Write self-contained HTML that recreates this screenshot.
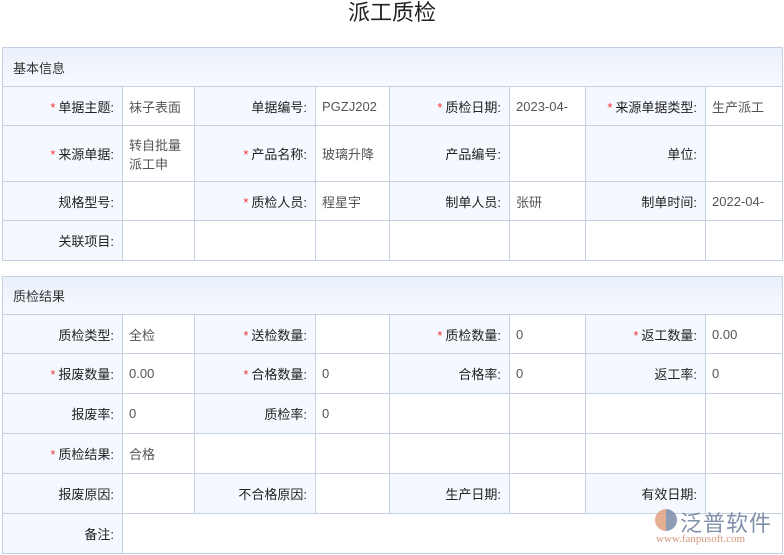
<!DOCTYPE html><html><head><meta charset="utf-8"><style>
body{margin:0;width:784px;height:555px;background:#fff;font-family:"Liberation Sans","Noto Sans CJK SC",sans-serif;font-size:13px;color:#222;position:relative;overflow:hidden}
h1{position:absolute;top:0;left:0;width:784px;margin:0;text-align:center;font-weight:normal;font-size:22px;line-height:26px;color:#222}
table{position:absolute;left:2px;border-collapse:collapse;table-layout:fixed;width:780px}
td{border:1px solid #c5d0e0;padding:0 6px;vertical-align:middle}
td.l{background:#f5f9ff;text-align:right;padding-right:8px}
td.v{color:#555;background:#fff}
tr.h td{background:linear-gradient(#eaf0fb,#f7f9fe);text-align:left;color:#333;padding-left:10px}
i{color:#e33;font-style:normal;margin-right:3px}
</style></head><body>
<h1>派工质检</h1>
<table style="top:47px"><colgroup><col style="width:120px"><col style="width:72px"><col style="width:121px"><col style="width:74px"><col style="width:120px"><col style="width:76px"><col style="width:120px"><col style="width:77px"></colgroup>
<tr class="h" style="height:39px"><td colspan="8">基本信息</td></tr>
<tr style="height:39px"><td class="l"><i>*</i>单据主题:</td><td class="v">袜子表面</td><td class="l">单据编号:</td><td class="v">PGZJ202</td><td class="l"><i>*</i>质检日期:</td><td class="v">2023-04-</td><td class="l"><i>*</i>来源单据类型:</td><td class="v">生产派工</td></tr>
<tr style="height:56px"><td class="l"><i>*</i>来源单据:</td><td class="v">转自批量派工申</td><td class="l"><i>*</i>产品名称:</td><td class="v">玻璃升降</td><td class="l">产品编号:</td><td class="v"></td><td class="l">单位:</td><td class="v"></td></tr>
<tr style="height:39px"><td class="l">规格型号:</td><td class="v"></td><td class="l"><i>*</i>质检人员:</td><td class="v">程星宇</td><td class="l">制单人员:</td><td class="v">张研</td><td class="l">制单时间:</td><td class="v">2022-04-</td></tr>
<tr style="height:40px"><td class="l">关联项目:</td><td class="v"></td><td class="v"></td><td class="v"></td><td class="v"></td><td class="v"></td><td class="v"></td><td class="v"></td></tr>
</table>
<table style="top:276px"><colgroup><col style="width:120px"><col style="width:72px"><col style="width:121px"><col style="width:74px"><col style="width:120px"><col style="width:76px"><col style="width:120px"><col style="width:77px"></colgroup>
<tr class="h" style="height:38px"><td colspan="8">质检结果</td></tr>
<tr style="height:39px"><td class="l">质检类型:</td><td class="v">全检</td><td class="l"><i>*</i>送检数量:</td><td class="v"></td><td class="l"><i>*</i>质检数量:</td><td class="v">0</td><td class="l"><i>*</i>返工数量:</td><td class="v">0.00</td></tr>
<tr style="height:40px"><td class="l"><i>*</i>报废数量:</td><td class="v">0.00</td><td class="l"><i>*</i>合格数量:</td><td class="v">0</td><td class="l">合格率:</td><td class="v">0</td><td class="l">返工率:</td><td class="v">0</td></tr>
<tr style="height:40px"><td class="l">报废率:</td><td class="v">0</td><td class="l">质检率:</td><td class="v">0</td><td class="v"></td><td class="v"></td><td class="v"></td><td class="v"></td></tr>
<tr style="height:40px"><td class="l"><i>*</i>质检结果:</td><td class="v">合格</td><td class="v"></td><td class="v"></td><td class="v"></td><td class="v"></td><td class="v"></td><td class="v"></td></tr>
<tr style="height:40px"><td class="l">报废原因:</td><td class="v"></td><td class="l">不合格原因:</td><td class="v"></td><td class="l">生产日期:</td><td class="v"></td><td class="l">有效日期:</td><td class="v"></td></tr>
<tr style="height:40px"><td class="l">备注:</td><td class="v" colspan="7"></td></tr>
</table>
<div style="position:absolute;left:655px;top:509px;width:22px;height:22px;border-radius:50%;background:conic-gradient(#7a8aa8 0 50%,#e0a080 50% 100%);opacity:.85"></div>
<div style="position:absolute;left:680px;top:506px;font-size:22px;color:#8090aa;letter-spacing:1px">泛普软件</div>
<div style="position:absolute;left:656px;top:533px;font-family:'Liberation Serif',serif;font-size:11px;color:#d8957a">www.fanpusoft.com</div>
</body></html>
